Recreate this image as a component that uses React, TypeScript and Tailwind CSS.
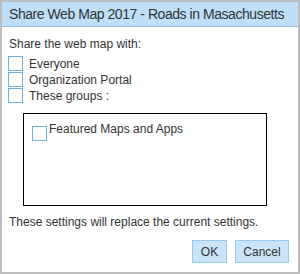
import React from "react";

function Box() {
  return <span className="block w-[15px] h-[15px] border border-[#6fb0e0] bg-white shrink-0" />;
}

export default function App() {
  return (
    <div className="w-[300px] h-[274px] bg-white border-2 border-[#bdbdbd] flex flex-col text-[#333] text-[12px]" style={{ fontFamily: '"Liberation Sans", Arial, sans-serif' }}>
      <div className="h-[25px] bg-[#bfdef8] border-b border-[#8dbde6] flex items-center pl-[7px] text-[14px] tracking-[-0.45px] text-[#333] shrink-0 whitespace-nowrap overflow-hidden">
        Share Web Map 2017 - Roads in Masachusetts
      </div>
      <div className="flex flex-col pl-[6px] pr-[8px]">
        <div className="mt-[10px] pl-[1px] leading-[14px]">Share the web map with:</div>
        <div className="mt-[5px] flex flex-col gap-[1px]">
          <label className="flex items-center gap-[6px] h-[15px]"><Box /><span>Everyone</span></label>
          <label className="flex items-center gap-[6px] h-[15px]"><Box /><span>Organization Portal</span></label>
          <label className="flex items-center gap-[6px] h-[15px]"><Box /><span>These groups :</span></label>
        </div>
        <div className="ml-[15px] mr-[23px] mt-[10px] h-[93px] border border-black pl-[8px] pt-[8px]">
          <div className="flex items-start gap-[2px]">
            <span className="mt-[4px]"><Box /></span>
            <span className="leading-[14px]">Featured Maps and Apps</span>
          </div>
        </div>
        <div className="mt-[9px] pl-[1px] leading-[14px]">These settings will replace the current settings.</div>
        <div className="mt-[11px] flex justify-end gap-[8px] pr-[1px]">
          <button className="w-[35px] h-[23px] bg-[#cce4f7] border border-[#99cbf2] text-[#333] text-[12px]">OK</button>
          <button className="w-[54px] h-[23px] bg-[#cce4f7] border border-[#99cbf2] text-[#333] text-[12px]">Cancel</button>
        </div>
      </div>
    </div>
  );
}
